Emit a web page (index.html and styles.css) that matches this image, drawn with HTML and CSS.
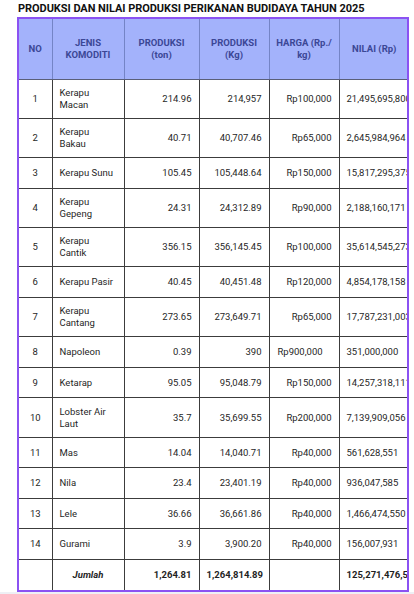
FILE: index.html
```html
<!DOCTYPE html>
<html lang="id">
<head>
<meta charset="utf-8">
<title>Produksi dan Nilai Produksi Perikanan Budidaya Tahun 2025</title>
<link rel="stylesheet" href="styles.css">
</head>
<body>
<div class="page">
  <h1 class="title">PRODUKSI DAN NILAI PRODUKSI PERIKANAN BUDIDAYA TAHUN 2025</h1>
  <div class="box">
    <table class="data">
      <colgroup>
        <col class="c-no"><col class="c-name"><col class="c-ton"><col class="c-kg"><col class="c-price"><col class="c-val">
      </colgroup>
      <thead>
        <tr>
          <th>NO</th>
          <th>JENIS KOMODITI</th>
          <th>PRODUKSI (ton)</th>
          <th>PRODUKSI (Kg)</th>
          <th>HARGA (Rp./ kg)</th>
          <th>NILAI (Rp)</th>
        </tr>
      </thead>
      <tbody>
        <tr class="tall"><td class="no">1</td><td class="name">Kerapu Macan</td><td class="num">214.96</td><td class="num">214,957</td><td class="num">Rp100,000</td><td class="val">21,495,695,800</td></tr>
        <tr class="tall"><td class="no">2</td><td class="name">Kerapu Bakau</td><td class="num">40.71</td><td class="num">40,707.46</td><td class="num">Rp65,000</td><td class="val">2,645,984,964</td></tr>
        <tr><td class="no">3</td><td class="name">Kerapu Sunu</td><td class="num">105.45</td><td class="num">105,448.64</td><td class="num">Rp150,000</td><td class="val">15,817,295,375</td></tr>
        <tr class="tall"><td class="no">4</td><td class="name">Kerapu Gepeng</td><td class="num">24.31</td><td class="num">24,312.89</td><td class="num">Rp90,000</td><td class="val">2,188,160,171</td></tr>
        <tr class="tall"><td class="no">5</td><td class="name">Kerapu Cantik</td><td class="num">356.15</td><td class="num">356,145.45</td><td class="num">Rp100,000</td><td class="val">35,614,545,273</td></tr>
        <tr><td class="no">6</td><td class="name">Kerapu Pasir</td><td class="num">40.45</td><td class="num">40,451.48</td><td class="num">Rp120,000</td><td class="val">4,854,178,158</td></tr>
        <tr class="tall"><td class="no">7</td><td class="name">Kerapu Cantang</td><td class="num">273.65</td><td class="num">273,649.71</td><td class="num">Rp65,000</td><td class="val">17,787,231,003</td></tr>
        <tr><td class="no">8</td><td class="name">Napoleon</td><td class="num">0.39</td><td class="num">390</td><td class="left">Rp900,000</td><td class="val">351,000,000</td></tr>
        <tr><td class="no">9</td><td class="name">Ketarap</td><td class="num">95.05</td><td class="num">95,048.79</td><td class="num">Rp150,000</td><td class="val">14,257,318,111</td></tr>
        <tr class="tall"><td class="no">10</td><td class="name">Lobster Air Laut</td><td class="num">35.7</td><td class="num">35,699.55</td><td class="num">Rp200,000</td><td class="val">7,139,909,056</td></tr>
        <tr><td class="no">11</td><td class="name">Mas</td><td class="num">14.04</td><td class="num">14,040.71</td><td class="num">Rp40,000</td><td class="val">561,628,551</td></tr>
        <tr><td class="no">12</td><td class="name">Nila</td><td class="num">23.4</td><td class="num">23,401.19</td><td class="num">Rp40,000</td><td class="val">936,047,585</td></tr>
        <tr><td class="no">13</td><td class="name">Lele</td><td class="num">36.66</td><td class="num">36,661.86</td><td class="num">Rp40,000</td><td class="val">1,466,474,550</td></tr>
        <tr><td class="no">14</td><td class="name">Gurami</td><td class="num">3.9</td><td class="num">3,900.20</td><td class="num">Rp40,000</td><td class="val">156,007,931</td></tr>
        <tr class="total"><td class="no"></td><td class="label">Jumlah</td><td class="num">1,264.81</td><td class="num">1,264,814.89</td><td class="num"></td><td class="val">125,271,476,535</td></tr>
      </tbody>
    </table>
  </div>
  <div class="band"></div>
</div>
</body>
</html>
```
FILE: styles.css
```css
* { box-sizing: border-box; }
html, body { margin: 0; padding: 0; background: #ffffff; }
body { font-family: Roboto, "Noto Sans", sans-serif; color: #1f1f1f; }

.page { width: 414px; height: 594px; overflow: hidden; }

.title {
  margin: 0;
  padding: 2px 0 0 18px;
  height: 17px;
  font-family: Roboto, "Noto Sans", sans-serif;
  font-size: 11px;
  line-height: 13px;
  font-weight: 700;
  letter-spacing: -0.05px;
  color: #111111;
  white-space: nowrap;
}

.box {
  margin-left: 17px;
  width: 392px;
  border: 2px solid #8b52f2;
  overflow: hidden;
}

.data {
  width: 390px;
  table-layout: fixed;
  border-collapse: collapse;
  font-size: 9.5px;
}

.c-no { width: 33px; }
.c-name { width: 72px; }
.c-ton { width: 75px; }
.c-kg { width: 70px; }
.c-price { width: 70px; }
.c-val { width: 70px; }

.data th {
  height: 60px;
  padding: 0 4px;
  background: #a3b2fb;
  color: #3b4796;
  font-weight: 700;
  font-size: 9.5px;
  line-height: 11.5px;
  text-align: center;
  vertical-align: middle;
  border-left: 1px solid #7484c6;
  border-bottom: 1px solid #5a5f78;
}
.data th:first-child { border-left: none; }

.data tbody tr { height: 30.6px; }
.data tbody tr.tall { height: 39.3px; }

.data td {
  padding: 0 7px;
  line-height: 11.7px;
  vertical-align: middle;
  border-left: 1px solid #3c3c3c;
  border-bottom: 1px solid #3c3c3c;
  white-space: nowrap;
}
.data td:first-child { border-left: none; }
.data tbody tr:last-child td { border-bottom: none; }

.data td.no { text-align: center; padding: 0; }
.data td.name { white-space: normal; padding: 0 8px 0 7px; }
.data td.num { text-align: right; }
.data td.left { text-align: left; padding: 0 0 0 8px; }
.data td.val { text-align: left; padding: 0 0 0 7px; overflow: visible; }

.total td { font-weight: 700; }
.total td.label { font-style: italic; text-align: center; }

.band { height: 10px; background: #eef0f5; }
```
